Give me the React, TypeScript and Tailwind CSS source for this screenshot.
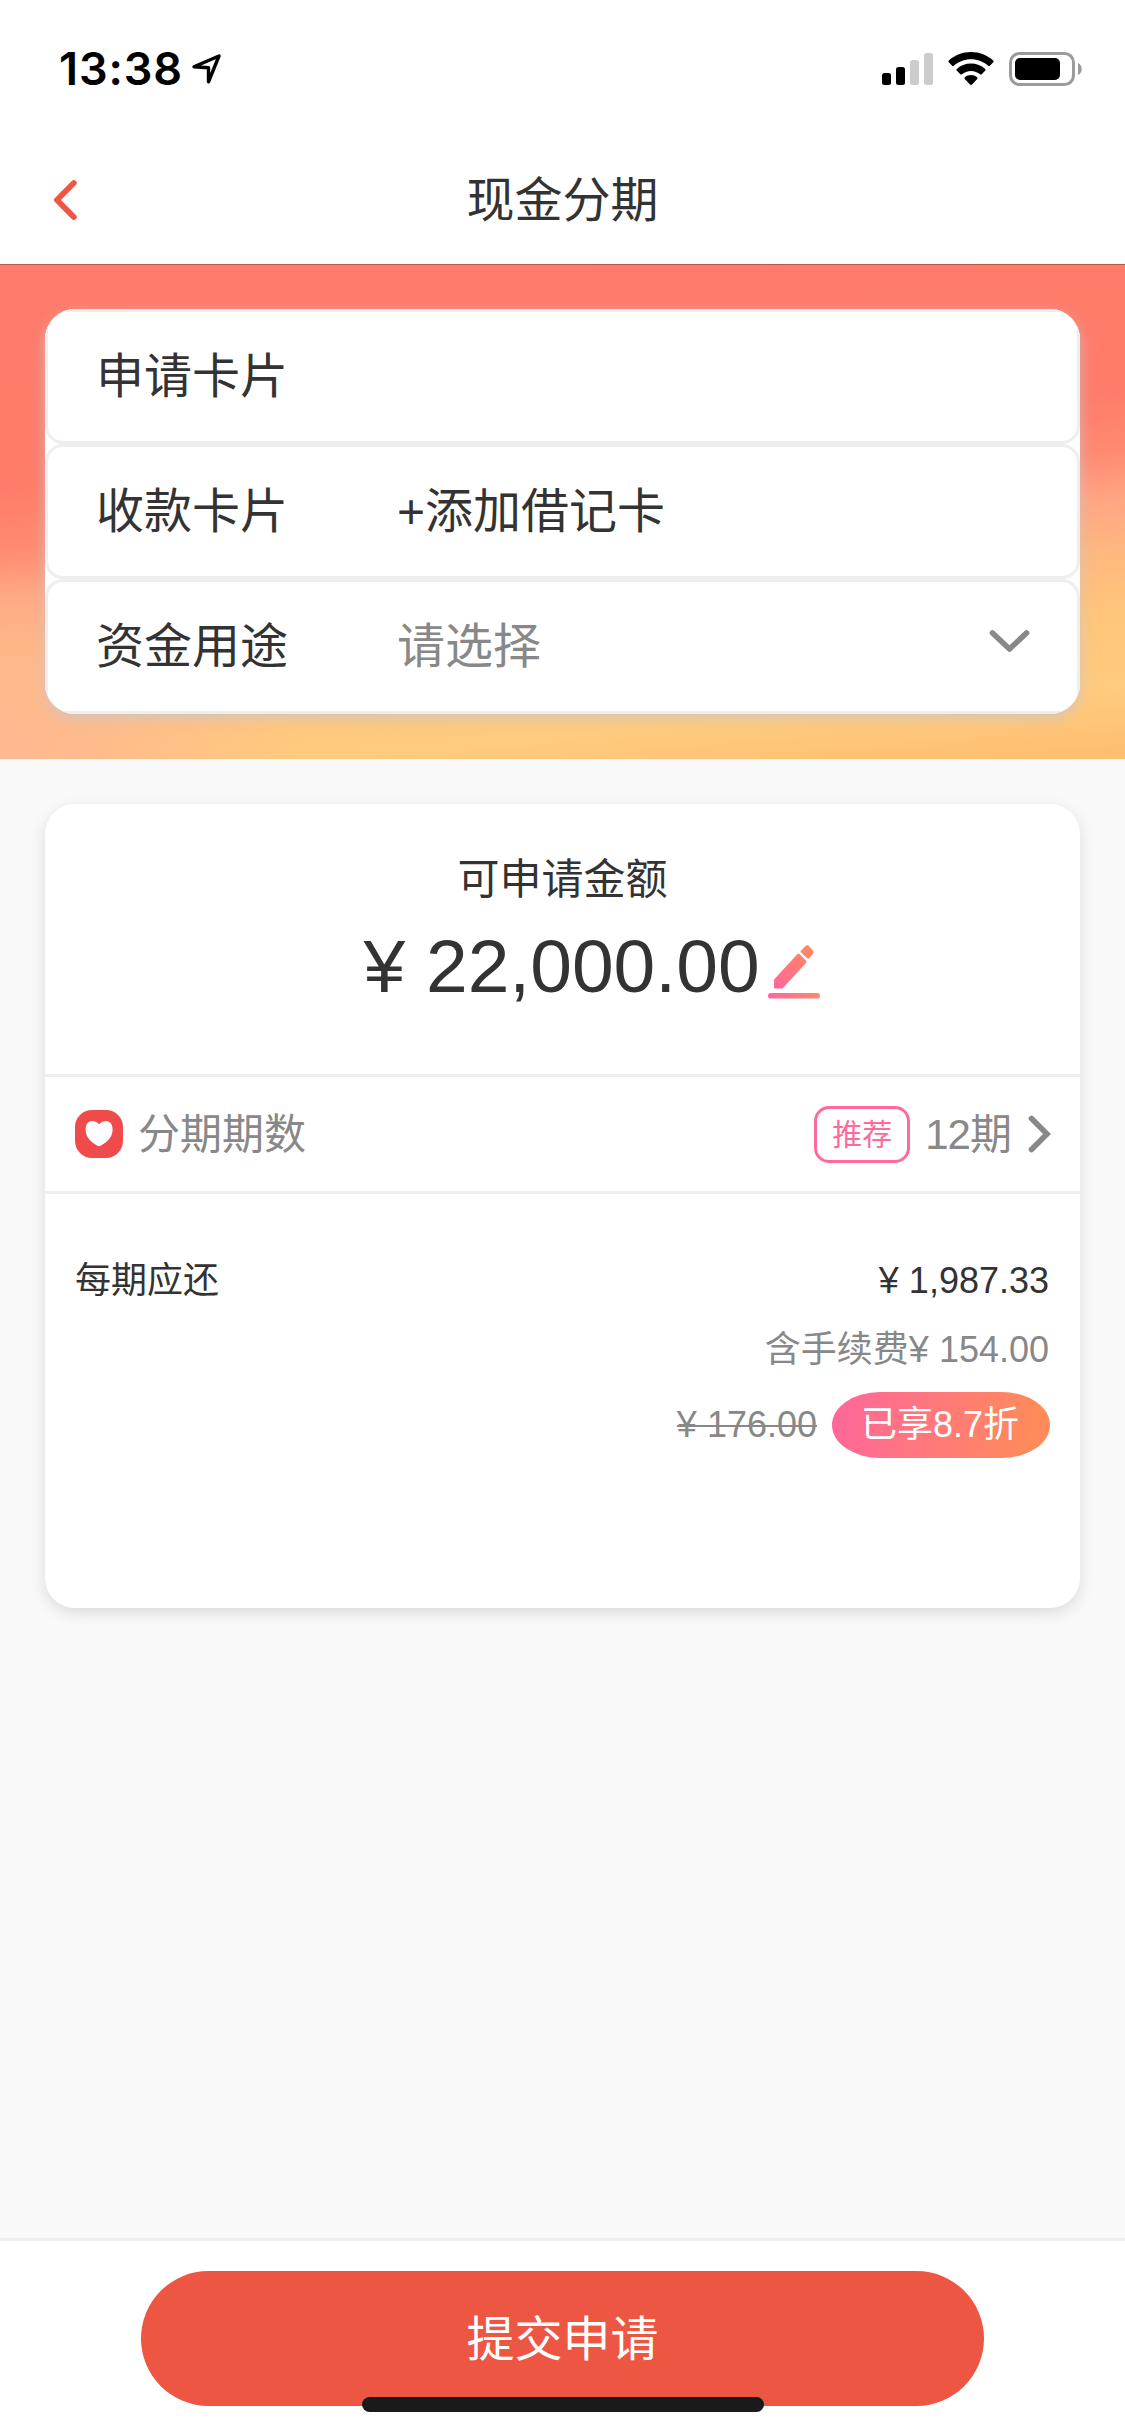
import React from "react";
import clsx from "clsx";

const StatusBar: React.FC = () => (
  <div className="flex h-[132px] items-start justify-between pl-[59px] pr-[42px] pt-[45px]">
    <div className="flex items-start">
      <span className="w-[133px] whitespace-nowrap font-['Inter'] text-[45px] font-semibold leading-[48px] tracking-[0.9px] text-black">
        13:38
      </span>
      <svg className="mt-[8px]" width="31" height="32" viewBox="0 0 31 32" fill="none">
        <path
          d="M2 13.800 27 3 16.500 28.800V14.800Z"
          stroke="#000"
          strokeWidth="3.400"
          strokeLinejoin="round"
        />
      </svg>
    </div>
    <div className="flex items-start pt-[7px]">
      <svg width="52" height="34" viewBox="0 0 52 34">
        <rect x="0" y="21" width="9" height="12" rx="2.500" fill="#000" />
        <rect x="14" y="15" width="9" height="18" rx="2.500" fill="#000" />
        <rect x="28" y="8" width="9" height="25" rx="2.500" fill="#ccc" />
        <rect x="42" y="1" width="9" height="32" rx="2.500" fill="#ccc" />
      </svg>
      <svg className="ml-[14px]" width="46" height="34" viewBox="0 0 46 34" fill="#000">
        <path d="M23 0c8.600 0 16.300 3.200 22.200 8.500.5.500.5 1.200.1 1.700l-3.500 3.500c-.5.500-1.100.5-1.600.1C35.600 9.700 29.600 7.300 23 7.300S10.400 9.700 5.800 13.800c-.5.400-1.200.4-1.600-.1L.7 10.200c-.5-.5-.4-1.200.1-1.700C6.700 3.200 14.400 0 23 0Z" />
        <path d="M23 11.500c5.500 0 10.400 2 14.200 5.400.5.500.5 1.200.1 1.700l-3.600 3.600c-.4.400-1.100.5-1.600.1-2.500-2.100-5.600-3.400-9.100-3.400s-6.600 1.300-9.100 3.400c-.5.400-1.200.3-1.600-.1l-3.600-3.600c-.5-.5-.4-1.200.1-1.700 3.800-3.400 8.700-5.400 14.200-5.400Z" />
        <path d="M23 23c2.300 0 4.400.8 6.100 2.200.6.500.5 1.200.1 1.700L24 32.500c-.6.600-1.400.6-2 0l-5.200-5.600c-.5-.5-.5-1.200.1-1.700C18.600 23.800 20.700 23 23 23Z" />
      </svg>
      <svg className="ml-[15px]" width="74" height="34" viewBox="0 0 74 34">
        <rect x="1.500" y="1.500" width="63" height="31" rx="9" fill="none" stroke="#9b9b9b" strokeWidth="3" />
        <rect x="6" y="6" width="45" height="22" rx="5" fill="#000" />
        <path d="M69 11c5 2 5 10 0 12Z" fill="#9b9b9b" />
      </svg>
    </div>
  </div>
);

const Header: React.FC = () => (
  <header className="flex h-[133px] items-center justify-between border-b border-[#b9584c] px-[52px] pt-[4px]">
    <svg width="27" height="42" viewBox="0 0 27 42" fill="none">
      <path
        d="M21.800 4 5 21 21.800 38"
        stroke="#ee5544"
        strokeWidth="5.800"
        strokeLinecap="round"
        strokeLinejoin="round"
      />
    </svg>
    <h1 className="pt-[2px] text-[48px] leading-[72px]">现金分期</h1>
    <div className="w-[27px]" />
  </header>
);

interface FormRowProps {
  label: string;
  value?: string;
  placeholder?: boolean;
  children?: React.ReactNode;
}

const FormRow: React.FC<FormRowProps> = ({ label, value, placeholder, children }) => (
  <div className="flex h-[135px] items-center rounded-[18px] border-[3px] border-[#eee] pl-[48px] pr-[46px] text-[48px] leading-[72px]">
    <span className="w-[301px]">{label}</span>
    <span className={clsx("flex-1", placeholder && "text-[#888]")}>{value}</span>
    {children}
  </div>
);

const EditIcon: React.FC = () => (
  <svg className="ml-[8px] mt-[21px]" width="53" height="54" viewBox="0 0 53 54">
    <defs>
      <linearGradient id="pen" gradientUnits="userSpaceOnUse" x1="6" y1="44" x2="44" y2="4">
        <stop stopColor="#ff669c" />
        <stop offset="1" stopColor="#ff8a5e" />
      </linearGradient>
      <linearGradient id="line" x1="0" y1="0" x2="1" y2="0">
        <stop stopColor="#ff669c" />
        <stop offset="1" stopColor="#ff8870" />
      </linearGradient>
    </defs>
    <path
      d="M6.500 34 29.500 9Q30.500 8 31.700 9.200L38 15.500Q39.200 16.700 38 17.900L15.500 42.500Q14.600 43.400 13.300 43.400H7.200Q6 43.400 6 42.200V35.500Q6 34.600 6.500 34Z"
      fill="url(#pen)"
    />
    <path
      d="M33 5.700 37.200 1.200Q39.200-.8 41.200 1.200L44.500 5Q46.300 7.200 44.500 9.300L41.500 13Q40.300 14.300 39 13L33 7.600Q32.200 6.700 33 5.700Z"
      fill="url(#pen)"
    />
    <rect x="0" y="48" width="52" height="5.600" rx="2.800" fill="url(#line)" />
  </svg>
);

const HeartIcon: React.FC = () => (
  <svg width="48" height="48" viewBox="0 0 48 48">
    <rect width="48" height="48" rx="17" fill="#ef4b4a" />
    <path
      d="M24 14.300C26 11.800 28.700 11 31.200 11 35 11 37.600 14.500 37.600 19.500 37.600 28 31 32.500 26 35.600Q24 36.800 22 35.600C17 32.500 10.600 28 10.600 19.500 10.600 14.500 13.200 11 17 11 19.500 11 22 11.800 24 14.300Z"
      fill="#fff"
    />
  </svg>
);

const App: React.FC = () => {
  return (
    <div className="flex h-[2436px] w-[1125px] flex-col overflow-hidden bg-[#f9f9f9] font-['Liberation_Sans','Noto_Sans_CJK_SC',sans-serif] text-[#333]">
      <div className="h-[265px] bg-white">
        <StatusBar />
        <Header />
      </div>

      <section className="h-[494px] bg-[radial-gradient(ellipse_300px_170px_at_0%_96%,rgba(255,182,146,0.9)_10%,rgba(255,182,146,0)),linear-gradient(175deg,#ff7a6a_0%,#ff7c6a_38%,#ff8a72_48%,#ffa683_56%,#ffb880_65%,#ffc57b_75%,#ffcb7e_88%,#ffbd70_100%)] px-[45px] pt-[44px]">
        <div className="overflow-hidden rounded-[30px] bg-white shadow-[0_5px_14px_rgba(200,200,200,0.75)]">
          <FormRow label="申请卡片" />
          <FormRow label="收款卡片" value="+添加借记卡" />
          <FormRow label="资金用途" value="请选择" placeholder>
            <svg className="-mt-[12px]" width="43" height="24" viewBox="0 0 43 24" fill="none">
              <path
                d="M4.500 4 21.500 20 38.500 4"
                stroke="#888"
                strokeWidth="5.600"
                strokeLinecap="round"
                strokeLinejoin="round"
              />
            </svg>
          </FormRow>
        </div>
      </section>

      <main className="flex-1 px-[45px] pt-[45px]">
        <div className="h-[804px] rounded-[30px] bg-white shadow-[0_5px_15px_rgba(0,0,0,0.12)]">
          <div className="flex h-[273px] flex-col items-center border-b-[3px] border-[#eee] pt-[44px]">
            <p className="text-[42px] leading-[63px]">可申请金额</p>
            <div className="flex items-start pl-[59px] pt-[13px]">
              <span className="text-[75px] leading-[84px]">¥ 22,000.00</span>
              <EditIcon />
            </div>
          </div>

          <div className="flex h-[117px] items-center border-b-[3px] border-[#eee] pl-[30px] pr-[27px] text-[42px] text-[#888]">
            <HeartIcon />
            <span className="ml-[15px] flex-1">分期期数</span>
            <span className="flex h-[57px] w-[96px] items-center justify-center rounded-[15px] border-[3px] border-[#ff6a9b] text-[30px] text-[#ff6a9b]">
              推荐
            </span>
            <span className="ml-[15px]">
              <span className="tracking-[-1px]">12</span>期
            </span>
            <svg className="ml-[15px]" width="26" height="40" viewBox="0 0 26 40" fill="none">
              <path
                d="M4.500 4.500 20 20 4.500 35.500"
                stroke="#888"
                strokeWidth="5.600"
                strokeLinecap="round"
              />
            </svg>
          </div>

          <div className="flex justify-between px-[30px] pt-[60px] text-[36px] leading-[54px]">
            <span>每期应还</span>
            <div className="flex flex-col items-end">
              <span className="pr-px">¥ 1,987.33</span>
              <span className="mt-[15px] pr-px text-[#888]">含手续费¥ 154.00</span>
              <div className="mt-[15px] flex items-center">
                <span className="text-[#888] line-through decoration-2">¥ 176.00</span>
                <span className="ml-[15px] flex h-[66px] w-[218px] items-center justify-center rounded-[48px/33px] bg-linear-[100deg,#ff669c,#ff8a5b_90%] pr-[2px] text-white">
                  已享8.7折
                </span>
              </div>
            </div>
          </div>
        </div>
      </main>

      <footer className="relative flex h-[198px] justify-center border-t-[3px] border-[#eee] bg-white pt-[30px]">
        <button className="h-[135px] w-[843px] rounded-full bg-[#ed5643] pt-[2px] text-[48px] text-white">
          提交申请
        </button>
        <div className="absolute bottom-[24px] left-[362px] h-[15px] w-[402px] rounded-full bg-[#1a1a1a]" />
      </footer>
    </div>
  );
};

export default App;
